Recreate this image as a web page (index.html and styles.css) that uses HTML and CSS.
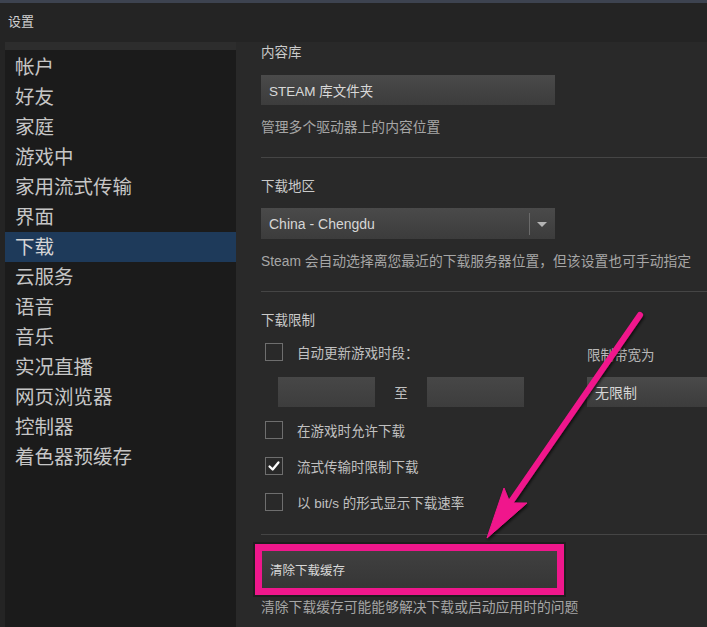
FILE: index.html
```html
<!DOCTYPE html>
<html lang="zh-CN">
<head>
    <meta charset="UTF-8">
    <title>设置</title>
    <link rel="stylesheet" href="styles.css">
</head>
<body>
    <div class="topline"></div>
    <div class="title">设置</div>

    <div class="main">
        <nav class="sidebar">
            <div class="sidebar-head"></div>
            <ul class="nav-list">
                <li>帐户</li>
                <li>好友</li>
                <li>家庭</li>
                <li>游戏中</li>
                <li>家用流式传输</li>
                <li>界面</li>
                <li class="active">下载</li>
                <li>云服务</li>
                <li>语音</li>
                <li>音乐</li>
                <li>实况直播</li>
                <li>网页浏览器</li>
                <li>控制器</li>
                <li>着色器预缓存</li>
            </ul>
        </nav>

        <div class="content">
            <!-- content library -->
            <div class="section first">
                <div class="label">内容库</div>
                <div class="btn btn-wide">STEAM 库文件夹</div>
                <div class="desc">管理多个驱动器上的内容位置</div>
            </div>
            <hr class="sep">

            <!-- download region -->
            <div class="section">
                <div class="label">下载地区</div>
                <div class="dropdown dropdown-region">
                    <span class="dd-text">China - Chengdu</span>
                    <span class="dd-arrow"></span>
                </div>
                <div class="desc">Steam 会自动选择离您最近的下载服务器位置，但该设置也可手动指定</div>
            </div>
            <hr class="sep">

            <!-- download limits -->
            <div class="section">
                <div class="label">下载限制</div>
                <div class="limit-grid">
                    <div class="check-row">
                        <span class="checkbox"></span>
                        <span>自动更新游戏时段：</span>
                    </div>
                    <div class="right-label">限制带宽为</div>
                    <div class="time-row">
                        <div class="time-input"></div>
                        <span class="time-sep">至</span>
                        <div class="time-input"></div>
                    </div>
                    <div class="dropdown dropdown-bw">
                        <span class="dd-text">无限制</span>
                    </div>
                </div>
                <div class="check-list">
                    <div class="check-row">
                        <span class="checkbox"></span>
                        <span>在游戏时允许下载</span>
                    </div>
                    <div class="check-row">
                        <span class="checkbox checked">
                            <svg viewBox="0 0 18 18" width="18" height="18"><path d="M4 9.5 L7.5 13 L14 5" fill="none" stroke="#fff" stroke-width="2.6" stroke-linecap="round" stroke-linejoin="round"/></svg>
                        </span>
                        <span>流式传输时限制下载</span>
                    </div>
                    <div class="check-row">
                        <span class="checkbox"></span>
                        <span>以 bit/s 的形式显示下载速率</span>
                    </div>
                </div>
            </div>
            <hr class="sep sep-last">

            <!-- clear cache -->
            <div class="section-clear">
                <div class="btn btn-clear">清除下载缓存</div>
                <div class="desc desc-clear">清除下载缓存可能能够解决下载或启动应用时的问题</div>
            </div>
        </div>
    </div>

    <!-- annotation arrow -->
    <svg class="arrow" viewBox="0 0 707 627" width="707" height="627">
        <defs>
            <filter id="shadow" x="-20%" y="-20%" width="140%" height="140%">
                <feDropShadow dx="1" dy="2" stdDeviation="1.5" flood-color="#000" flood-opacity="0.7"/>
            </filter>
        </defs>
        <g filter="url(#shadow)" fill="#f0168c" stroke="#f0168c">
            <line x1="640" y1="315" x2="510" y2="503" stroke-width="6" stroke-linecap="round"/>
            <polygon points="487,538 504,488 510,503 527,503" stroke-width="1" stroke-linejoin="round"/>
        </g>
    </svg>
</body>
</html>
```

FILE: styles.css
```css
body {
    margin: 0;
    background: #242424;
    font-family: 'Liberation Sans', 'Noto Sans CJK SC', sans-serif;
    color: #c4c4c4;
    width: 707px;
    height: 627px;
    overflow: hidden;
    position: relative;
}

.topline {
    height: 3px;
    background: #3d4350;
}

.title {
    height: 39px;
    box-sizing: border-box;
    padding: 10px 0 0 8px;
    font-size: 13px;
    line-height: 18px;
    color: #d0d0d0;
}

.main {
    display: flex;
    height: 585px;
}

.sidebar {
    width: 231px;
    margin-left: 5px;
    background: #1b1b1b;
}

.sidebar-head {
    height: 8px;
    background: #2d2d2d;
}

.nav-list {
    list-style: none;
    margin: 2px 0 0;
    padding: 0;
}

.nav-list li {
    height: 30px;
    line-height: 30px;
    padding-left: 10px;
    font-size: 19.5px;
    color: #c6c6c6;
}

.nav-list li.active {
    background: #1e3a5a;
    color: #d6d6d6;
}

.content {
    flex: 1;
    background: #292929;
    padding: 2px 0 0 25px;
    overflow: hidden;
}

.label {
    font-size: 13.5px;
    line-height: 18px;
    color: #cacaca;
}

.desc {
    font-size: 13.8px;
    line-height: 18px;
    color: #a6a6a6;
    margin-top: 14px;
    white-space: nowrap;
}

.section {
    padding-bottom: 20px;
}

.sep + .section {
    padding-top: 20px;
}

.sep {
    border: none;
    height: 1px;
    background: #454545;
    margin: 0;
}

.btn {
    box-sizing: border-box;
    background: linear-gradient(180deg, #4a4a4a 0%, #3c3c3c 100%);
    color: #d8d8d8;
    font-size: 13.5px;
    display: flex;
    align-items: center;
    padding-left: 8px;
}

.btn-wide {
    width: 294px;
    height: 30px;
    margin-top: 13px;
}

.dropdown {
    box-sizing: border-box;
    background: linear-gradient(180deg, #4a4a4a 0%, #3c3c3c 100%);
    display: flex;
    align-items: center;
    height: 31px;
    color: #d6d6d6;
}

.dropdown-region {
    width: 294px;
    margin-top: 12px;
}

.dd-text {
    flex: 1;
    padding-left: 8px;
    font-size: 14px;
}

.dd-arrow {
    width: 25px;
    height: 22px;
    border-left: 1px solid #6a6a6a;
    position: relative;
}

.dd-arrow::after {
    content: '';
    position: absolute;
    left: 7px;
    top: 9px;
    border-left: 5px solid transparent;
    border-right: 5px solid transparent;
    border-top: 5px solid #b4b4b4;
}

.limit-grid {
    display: grid;
    grid-template-columns: 326px 1fr;
    row-gap: 15px;
    margin-top: 13px;
}

.check-row {
    display: flex;
    align-items: center;
    height: 18px;
    font-size: 13.5px;
    color: #c0c0c0;
}

.checkbox {
    width: 18px;
    height: 18px;
    box-sizing: border-box;
    border: 1px solid #6e6e6e;
    margin: 0 14px 0 4px;
    display: flex;
    align-items: center;
    justify-content: center;
}

.checkbox svg {
    display: block;
}

.right-label {
    font-size: 13.5px;
    line-height: 18px;
    height: 18px;
    color: #b8b8b8;
    margin-top: 4px;
    margin-bottom: -4px;
}

.time-row {
    display: flex;
    align-items: center;
    padding-left: 17px;
}

.time-input {
    width: 97px;
    height: 30px;
    background: linear-gradient(180deg, #474747 0%, #3d3d3d 100%);
}

.time-sep {
    width: 52px;
    text-align: center;
    font-size: 13.5px;
    color: #c0c0c0;
}

.dropdown-bw {
    height: 30px;
    margin-top: 1px;
}

.check-list {
    display: flex;
    flex-direction: column;
    gap: 18px;
    margin-top: 14px;
}

.sep-last {
    margin-top: 3px;
}

.section-clear {
    padding-top: 16px;
}

.btn-clear {
    width: 295px;
    height: 37px;
    margin-left: 1px;
    font-size: 12.5px;
    background: linear-gradient(180deg, #404040 0%, #363636 100%);
    outline: 7px solid #ef178c;
    box-shadow: 0 0 0 9px rgba(0, 0, 0, 0.25);
}

.desc-clear {
    margin-top: 11px;
}

.arrow {
    position: absolute;
    left: 0;
    top: 0;
    pointer-events: none;
}
```
